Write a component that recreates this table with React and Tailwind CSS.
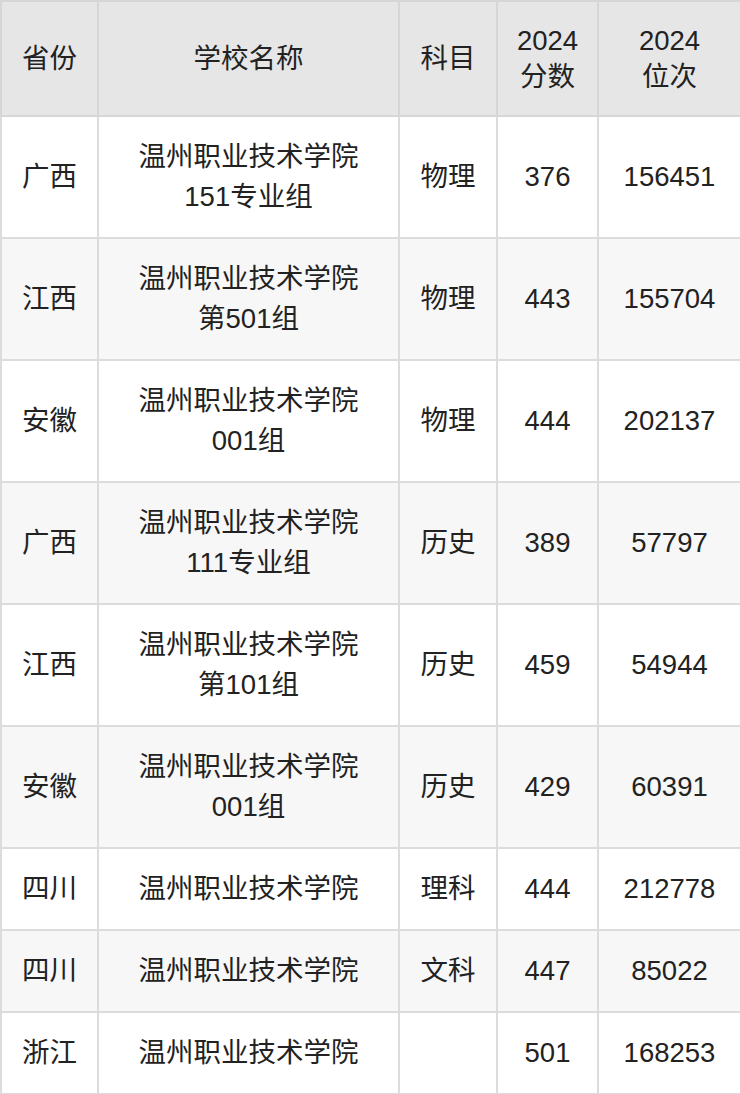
const rows = [
  ['广西', ['温州职业技术学院', '151专业组'], '物理', '376', '156451'],
  ['江西', ['温州职业技术学院', '第501组'], '物理', '443', '155704'],
  ['安徽', ['温州职业技术学院', '001组'], '物理', '444', '202137'],
  ['广西', ['温州职业技术学院', '111专业组'], '历史', '389', '57797'],
  ['江西', ['温州职业技术学院', '第101组'], '历史', '459', '54944'],
  ['安徽', ['温州职业技术学院', '001组'], '历史', '429', '60391'],
  ['四川', ['温州职业技术学院'], '理科', '444', '212778'],
  ['四川', ['温州职业技术学院'], '文科', '447', '85022'],
  ['浙江', ['温州职业技术学院'], '', '501', '168253'],
];

const font = { fontFamily: '"Liberation Sans", "Noto Sans CJK SC", sans-serif' };

export default function App() {
  return (
    <div className="w-[740px] bg-white" style={font}>
      <table className="w-[740px] table-fixed border-collapse text-[27.5px] text-[#222222]">
        <colgroup>
          <col className="w-[97px]" />
          <col className="w-[301px]" />
          <col className="w-[98px]" />
          <col className="w-[101px]" />
          <col className="w-[143px]" />
        </colgroup>
        <thead>
          <tr className="bg-[#e6e6e6] h-[115px]">
            <th className="border-2 border-[#d6d6d6] font-normal leading-[36px] text-center">省份</th>
            <th className="border-2 border-[#d6d6d6] font-normal leading-[36px] text-center">学校名称</th>
            <th className="border-2 border-[#d6d6d6] font-normal leading-[36px] text-center">科目</th>
            <th className="border-2 border-[#d6d6d6] font-normal leading-[36px] text-center">2024<br />分数</th>
            <th className="border-2 border-[#d6d6d6] font-normal leading-[36px] text-center">2024<br />位次</th>
          </tr>
        </thead>
        <tbody>
          {rows.map((r, i) => (
            <tr key={i} className={(i % 2 === 1 ? 'bg-[#f7f7f7] ' : 'bg-white ') + (r[1].length > 1 ? 'h-[122px]' : 'h-[82px]')}>
              <td className="border-2 border-[#dcdcdc] text-center leading-[40px]">{r[0]}</td>
              <td className="border-2 border-[#dcdcdc] text-center leading-[40px]">
                {r[1].map((t, j) => (
                  <div key={j}>{t}</div>
                ))}
              </td>
              <td className="border-2 border-[#dcdcdc] text-center leading-[40px]">{r[2]}</td>
              <td className="border-2 border-[#dcdcdc] text-center leading-[40px]">{r[3]}</td>
              <td className="border-2 border-[#dcdcdc] text-center leading-[40px]">{r[4]}</td>
            </tr>
          ))}
        </tbody>
      </table>
    </div>
  );
}
